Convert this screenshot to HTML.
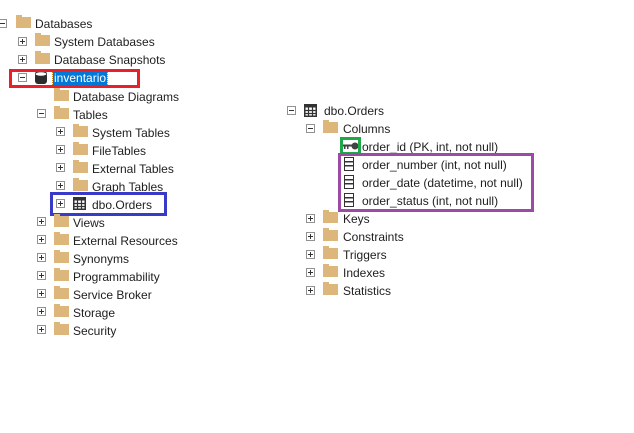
<!DOCTYPE html>
<html><head><meta charset="utf-8"><style>
body{margin:0;width:634px;height:433px;background:#fff;position:relative;overflow:hidden;font-family:"Liberation Sans",sans-serif;font-size:12px;color:#1e1e1e}
.e{position:absolute;width:7px;height:7px;border:1px solid #919191;background:#fff}
.e::before{content:"";position:absolute;left:1px;top:3px;width:5px;height:1px;background:#333}
.e.p::after{content:"";position:absolute;left:3px;top:1px;width:1px;height:5px;background:#333}
.f{position:absolute;width:15px;height:11px;background:#dcb67a}
.f::before{content:"";position:absolute;left:0;top:-2px;width:6px;height:2px;background:#dcb67a}
.t{position:absolute;line-height:16px;white-space:nowrap;margin-top:1px}
.box{position:absolute;border:3px solid}
.col{position:absolute;width:10px;height:14px;border:1.5px solid #333;box-sizing:border-box;background:
linear-gradient(#333,#333) 0 3px/100% 1.5px no-repeat,
linear-gradient(#333,#333) 0 7px/100% 1.5px no-repeat}
</style></head><body>

<!-- left tree -->
<div class="e" style="left:-2px;top:19px"></div><div class="f" style="left:16px;top:17px"></div><div class="t" style="left:35px;top:15px">Databases</div>
<div class="e p" style="left:18px;top:37px"></div><div class="f" style="left:35px;top:35px"></div><div class="t" style="left:54px;top:33px">System Databases</div>
<div class="e p" style="left:18px;top:55px"></div><div class="f" style="left:35px;top:53px"></div><div class="t" style="left:54px;top:51px">Database Snapshots</div>
<div class="e" style="left:18px;top:73px"></div>
<svg style="position:absolute;left:35px;top:71px" width="12" height="14"><rect x="0" y="2" width="12" height="11" rx="3" fill="#2b2b2b"/><ellipse cx="6" cy="3" rx="6" ry="2.3" fill="#fff" stroke="#2b2b2b"/></svg>
<div class="t" style="left:53px;top:70px;background:#0078d7;color:#fff;padding:0 1px;outline:1px dotted #d08020;height:15px;line-height:15px">inventario</div>
<div class="box" style="left:9px;top:69px;width:125px;height:13px;border-color:#e8202a"></div>

<div class="f" style="left:54px;top:90px"></div><div class="t" style="left:73px;top:88px">Database Diagrams</div>
<div class="e" style="left:37px;top:109px"></div><div class="f" style="left:54px;top:108px"></div><div class="t" style="left:73px;top:106px">Tables</div>
<div class="e p" style="left:56px;top:127px"></div><div class="f" style="left:73px;top:126px"></div><div class="t" style="left:92px;top:124px">System Tables</div>
<div class="e p" style="left:56px;top:145px"></div><div class="f" style="left:73px;top:144px"></div><div class="t" style="left:92px;top:142px">FileTables</div>
<div class="e p" style="left:56px;top:163px"></div><div class="f" style="left:73px;top:162px"></div><div class="t" style="left:92px;top:160px">External Tables</div>
<div class="e p" style="left:56px;top:181px"></div><div class="f" style="left:73px;top:180px"></div><div class="t" style="left:92px;top:178px">Graph Tables</div>
<div class="e p" style="left:56px;top:199px"></div>
<svg style="position:absolute;left:73px;top:197px" width="13" height="13"><rect x="0.75" y="0.75" width="11.5" height="11.5" fill="#fff" stroke="#333" stroke-width="1.5"/><rect x="0" y="0" width="13" height="3.5" fill="#333"/><path d="M0 6.5H13M0 9.5H13M4.5 0V13M8.5 0V13" stroke="#333" stroke-width="1.2"/></svg>
<div class="t" style="left:92px;top:196px">dbo.Orders</div>
<div class="box" style="left:50px;top:192px;width:111px;height:18px;border-color:#3a3ac8"></div>

<div class="e p" style="left:37px;top:217px"></div><div class="f" style="left:54px;top:216px"></div><div class="t" style="left:73px;top:214px">Views</div>
<div class="e p" style="left:37px;top:235px"></div><div class="f" style="left:54px;top:234px"></div><div class="t" style="left:73px;top:232px">External Resources</div>
<div class="e p" style="left:37px;top:253px"></div><div class="f" style="left:54px;top:252px"></div><div class="t" style="left:73px;top:250px">Synonyms</div>
<div class="e p" style="left:37px;top:271px"></div><div class="f" style="left:54px;top:270px"></div><div class="t" style="left:73px;top:268px">Programmability</div>
<div class="e p" style="left:37px;top:289px"></div><div class="f" style="left:54px;top:288px"></div><div class="t" style="left:73px;top:286px">Service Broker</div>
<div class="e p" style="left:37px;top:307px"></div><div class="f" style="left:54px;top:306px"></div><div class="t" style="left:73px;top:304px">Storage</div>
<div class="e p" style="left:37px;top:325px"></div><div class="f" style="left:54px;top:324px"></div><div class="t" style="left:73px;top:322px">Security</div>

<!-- right tree -->
<div class="e" style="left:287px;top:106px"></div>
<svg style="position:absolute;left:304px;top:104px" width="13" height="13"><rect x="0.75" y="0.75" width="11.5" height="11.5" fill="#fff" stroke="#333" stroke-width="1.5"/><rect x="0" y="0" width="13" height="3.5" fill="#333"/><path d="M0 6.5H13M0 9.5H13M4.5 0V13M8.5 0V13" stroke="#333" stroke-width="1.2"/></svg>
<div class="t" style="left:324px;top:102px">dbo.Orders</div>
<div class="e" style="left:306px;top:124px"></div><div class="f" style="left:323px;top:122px"></div><div class="t" style="left:343px;top:120px">Columns</div>
<svg style="position:absolute;left:343px;top:142px" width="16" height="8"><circle cx="12" cy="4" r="3.5" fill="#424242"/><rect x="0" y="2.5" width="10" height="2" fill="#424242"/><rect x="1" y="4" width="1.5" height="3" fill="#424242"/><rect x="4" y="4" width="1.5" height="3" fill="#424242"/></svg>
<div class="t" style="left:362px;top:138px">order_id (PK, int, not null)</div>
<div class="box" style="left:340px;top:137px;width:15px;height:12px;border-color:#1fa84a"></div>
<div class="col" style="left:344px;top:157px"></div><div class="t" style="left:362px;top:156px">order_number (int, not null)</div>
<div class="col" style="left:344px;top:175px"></div><div class="t" style="left:362px;top:174px">order_date (datetime, not null)</div>
<div class="col" style="left:344px;top:193px"></div><div class="t" style="left:362px;top:192px">order_status (int, not null)</div>
<div class="box" style="left:338px;top:153px;width:190px;height:53px;border-color:#9b4aa6"></div>

<div class="e p" style="left:306px;top:214px"></div><div class="f" style="left:323px;top:212px"></div><div class="t" style="left:343px;top:210px">Keys</div>
<div class="e p" style="left:306px;top:232px"></div><div class="f" style="left:323px;top:230px"></div><div class="t" style="left:343px;top:228px">Constraints</div>
<div class="e p" style="left:306px;top:250px"></div><div class="f" style="left:323px;top:248px"></div><div class="t" style="left:343px;top:246px">Triggers</div>
<div class="e p" style="left:306px;top:268px"></div><div class="f" style="left:323px;top:266px"></div><div class="t" style="left:343px;top:264px">Indexes</div>
<div class="e p" style="left:306px;top:286px"></div><div class="f" style="left:323px;top:284px"></div><div class="t" style="left:343px;top:282px">Statistics</div>
</body></html>
